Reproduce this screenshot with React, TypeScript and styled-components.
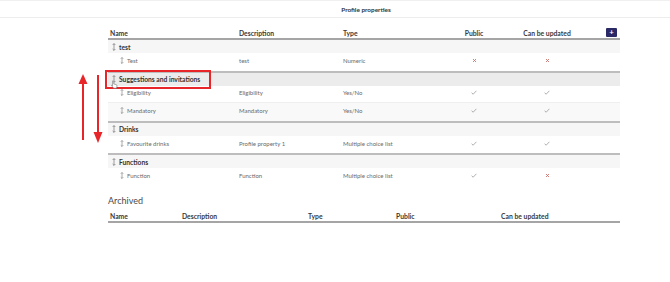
import React from 'react'
import styled, { createGlobalStyle } from 'styled-components'

const GlobalStyle = createGlobalStyle`
  html, body {
    margin: 0;
    padding: 0;
    background: #ffffff;
    font-family: Lato, 'Open Sans', sans-serif;
    color: #333333;
  }
`

const Page = styled.div`
  position: relative;
  width: 670px;
  height: 282px;
  overflow: hidden;
`

const TopBar = styled.div`
  height: 16px;
  border-top: 1px solid #f0f0f0;
  border-bottom: 1px solid #ededed;
  display: flex;
  align-items: center;
  justify-content: center;
  padding-left: 62px;
  font-size: 6.4px;
  font-weight: 700;
  color: #333333;
`

const Content = styled.div`
  width: 512px;
  margin: 9px 0 0 108px;
`

const MAIN_COLS = '129px 104px 100px 66px 80px 33px'
const ARCHIVE_COLS = '72px 126px 88px 105px 121px'

const HeaderRow = styled.div<{ $cols: string }>`
  display: grid;
  grid-template-columns: ${({ $cols }) => $cols};
  align-items: center;
  height: 11px;
  border-bottom: 2px solid #a5a5a5;
  font-size: 6.8px;
  font-weight: 700;
  color: #3a3a3a;
`

const HeadCell = styled.div<{ $center?: boolean }>`
  padding-left: ${({ $center }) => ($center ? '0' : '2px')};
  text-align: ${({ $center }) => ($center ? 'center' : 'left')};
  white-space: nowrap;
`

const AddCell = styled.div`
  display: flex;
  justify-content: flex-end;
  padding-right: 3px;
`

const AddButton = styled.button`
  width: 11px;
  height: 9px;
  padding: 0;
  border: none;
  border-radius: 1px;
  background: #2b2965;
  color: #ffffff;
  font-family: Lato, sans-serif;
  font-size: 8px;
  font-weight: 700;
  line-height: 9px;
  display: flex;
  align-items: center;
  justify-content: center;
`

const Group = styled.div<{ $first?: boolean }>`
  border-top: ${({ $first }) => ($first ? 'none' : '2px solid #bdbdbd')};
`

const GroupRow = styled.div<{ $hover?: boolean }>`
  height: 13px;
  display: flex;
  align-items: center;
  gap: 3px;
  padding-left: 4px;
  background: ${({ $hover }) => ($hover ? '#ececec' : '#f6f6f6')};
  font-size: 6.7px;
  font-weight: 700;
  color: #333333;
`

const ItemRow = styled.div<{ $striped?: boolean; $last?: boolean }>`
  display: grid;
  grid-template-columns: ${MAIN_COLS};
  align-items: center;
  height: 17.5px;
  padding-bottom: 2px;
  box-sizing: border-box;
  background: ${({ $striped }) => ($striped ? '#f9f9f9' : '#ffffff')};
  border-bottom: ${({ $last }) => ($last ? 'none' : '1px solid #efefef')};
  font-size: 6px;
  color: #6a6a6a;
`

const NameCell = styled.div`
  display: flex;
  align-items: center;
  gap: 3px;
  padding-left: 12px;
  white-space: nowrap;
`

const Cell = styled.div`
  padding-left: 2px;
  white-space: nowrap;
`

const MarkCell = styled.div`
  display: flex;
  justify-content: center;
`

const ArchivedTitle = styled.div`
  margin-top: 8.5px;
  height: 14px;
  line-height: 14px;
  font-size: 9px;
  color: #4a4a4a;
`

const ArchivedBlock = styled.div`
  margin-top: 2px;
`

const Annotation = styled.div`
  position: absolute;
  left: 105px;
  top: 70px;
  width: 102px;
  height: 15px;
  border: 2px solid #e8262a;
  pointer-events: none;
`

const ArrowLayer = styled.svg`
  position: absolute;
  left: 76px;
  top: 73px;
  pointer-events: none;
`

const Cursor = styled.svg`
  position: absolute;
  left: 111px;
  top: 80px;
  pointer-events: none;
`

const DragIcon = ({ size = 7 }: { size?: number }) => (
  <svg width='4' height={size} viewBox='0 0 4 8'>
    <path d='M2 0.6 V7.4 M0.6 2 L2 0.6 L3.4 2 M0.6 6 L2 7.4 L3.4 6' fill='none' stroke='#777' strokeWidth='0.7' />
  </svg>
)

const Mark = ({ ok }: { ok: boolean }) =>
  ok ? (
    <svg width='6' height='5' viewBox='0 0 6 5'>
      <path d='M0.6 2.8 L2.2 4.2 L5.4 0.8' fill='none' stroke='#9a9a9a' strokeWidth='0.8' />
    </svg>
  ) : (
    <svg width='5' height='5' viewBox='0 0 5 5'>
      <path d='M1 1 L4 4 M4 1 L1 4' fill='none' stroke='#c9746e' strokeWidth='0.9' />
    </svg>
  )

type Item = { name: string; description: string; type: string; pub: boolean; upd: boolean }
type GroupData = { title: string; hover?: boolean; items: Item[] }

const groups: GroupData[] = [
  { title: 'test', items: [{ name: 'Test', description: 'test', type: 'Numeric', pub: false, upd: false }] },
  {
    title: 'Suggestions and invitations',
    hover: true,
    items: [
      { name: 'Eligibility', description: 'Eligibility', type: 'Yes/No', pub: true, upd: true },
      { name: 'Mandatory', description: 'Mandatory', type: 'Yes/No', pub: true, upd: true },
    ],
  },
  {
    title: 'Drinks',
    items: [
      { name: 'Favourite drinks', description: 'Profile property 1', type: 'Multiple choice list', pub: true, upd: true },
    ],
  },
  {
    title: 'Functions',
    items: [{ name: 'Function', description: 'Function', type: 'Multiple choice list', pub: true, upd: false }],
  },
]

export default function App() {
  return (
    <Page>
      <GlobalStyle />
      <TopBar>Profile properties</TopBar>
      <Content>
        <HeaderRow $cols={MAIN_COLS}>
          <HeadCell>Name</HeadCell>
          <HeadCell>Description</HeadCell>
          <HeadCell>Type</HeadCell>
          <HeadCell $center>Public</HeadCell>
          <HeadCell $center>Can be updated</HeadCell>
          <AddCell>
            <AddButton>+</AddButton>
          </AddCell>
        </HeaderRow>
        {groups.map((g, gi) => (
          <Group key={g.title} $first={gi === 0}>
            <GroupRow $hover={g.hover}>
              <DragIcon size={8} />
              {g.title}
            </GroupRow>
            {g.items.map((it, ii) => (
              <ItemRow key={it.name} $striped={ii % 2 === 1} $last={ii === g.items.length - 1}>
                <NameCell>
                  <DragIcon />
                  {it.name}
                </NameCell>
                <Cell>{it.description}</Cell>
                <Cell>{it.type}</Cell>
                <MarkCell>
                  <Mark ok={it.pub} />
                </MarkCell>
                <MarkCell>
                  <Mark ok={it.upd} />
                </MarkCell>
                <div />
              </ItemRow>
            ))}
          </Group>
        ))}

        <ArchivedTitle>Archived</ArchivedTitle>
        <ArchivedBlock>
          <HeaderRow $cols={ARCHIVE_COLS}>
            <HeadCell>Name</HeadCell>
            <HeadCell>Description</HeadCell>
            <HeadCell>Type</HeadCell>
            <HeadCell>Public</HeadCell>
            <HeadCell>Can be updated</HeadCell>
          </HeaderRow>
        </ArchivedBlock>
      </Content>

      <Annotation />
      <ArrowLayer width='30' height='74' viewBox='0 0 30 74'>
        <path d='M7 67 V10' stroke='#e8262a' strokeWidth='2' />
        <path d='M2.5 11 L7 1 L11.5 11 Z' fill='#e8262a' />
        <path d='M22 2 V60' stroke='#e8262a' strokeWidth='2' />
        <path d='M17.5 59 L22 70 L26.5 59 Z' fill='#e8262a' />
      </ArrowLayer>
      <Cursor width='7' height='9' viewBox='0 0 7 9'>
        <path
          d='M2 0.8 C2.6 0.8 2.8 1.2 2.8 1.6 V4 L5.2 4.6 C5.8 4.8 6.2 5.2 6 6 L5.6 8.2 H2.6 L0.6 5.6 C0.4 5.2 0.8 4.8 1.2 5 L1.6 5.6 V1.6 C1.6 1.2 1.6 0.8 2 0.8 Z'
          fill='#ffffff'
          stroke='#555'
          strokeWidth='0.5'
        />
      </Cursor>
    </Page>
  )
}
